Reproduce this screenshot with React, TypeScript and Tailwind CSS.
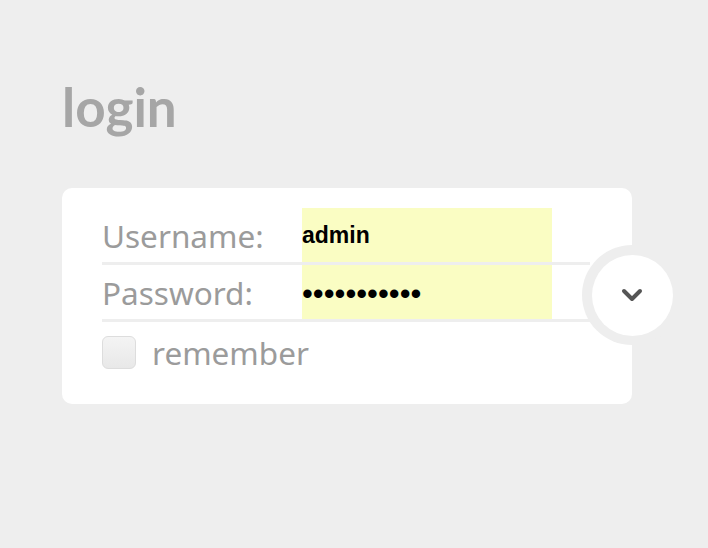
import { FC } from 'react'

const labelFont = { fontFamily: '"Noto Sans", "Open Sans", sans-serif' }

interface RowProps {
  label: string
  value: string
  secret?: boolean
}

const FieldRow: FC<RowProps> = ({ label, value, secret }) => (
  <div className="flex h-[57px] items-stretch border-b-[3px] border-[#eeeeee]">
    <div className="flex w-[200px] items-center pt-[2px] text-[31.5px] text-[#9b9b9b]" style={labelFont}>
      {label}
    </div>
    <div
      className={`flex w-[250px] items-center bg-[#fafdc3] text-black ${
        secret ? 'pt-[2px] text-[31px] leading-none' : 'text-[23px] font-bold'
      }`}
      style={{ fontFamily: '"Liberation Sans", Arial, sans-serif' }}
    >
      {secret ? '•'.repeat(11) : value}
    </div>
  </div>
)

export default function App() {
  return (
    <div className="min-h-[548px] w-full bg-[#eeeeee] pl-[62px] pt-[77px]">
      <h1
        className="h-[111px] text-[53px] font-bold leading-[60px] text-[#a6a6a6]"
        style={{ fontFamily: 'Lato, sans-serif' }}
      >
        login
      </h1>
      <div className="relative h-[216px] w-[570px] rounded-[10px] bg-white pl-10 pr-[42px] pt-5">
        <FieldRow label="Username:" value="admin" />
        <FieldRow label="Password:" value="secret" secret />
        <label className="mt-[7px] flex items-center gap-4">
          <span className="h-[33px] w-[34px] rounded-[6px] border border-[#dddddd] bg-gradient-to-b from-[#f4f4f4] to-[#e8e8e8]" />
          <span className="text-[31.5px] text-[#9b9b9b]" style={labelFont}>
            remember
          </span>
        </label>
        <button className="absolute right-[-50px] top-[57px] flex h-[100px] w-[100px] items-center justify-center rounded-full bg-[#eeeeee]">
          <span className="flex h-[81px] w-[81px] items-center justify-center rounded-full bg-white">
            <svg width="22" height="14" viewBox="0 0 22 14" fill="none">
              <polyline points="3,3 11,11 19,3" stroke="#555555" strokeWidth="4" strokeLinecap="round" strokeLinejoin="round" />
            </svg>
          </span>
        </button>
      </div>
    </div>
  )
}
